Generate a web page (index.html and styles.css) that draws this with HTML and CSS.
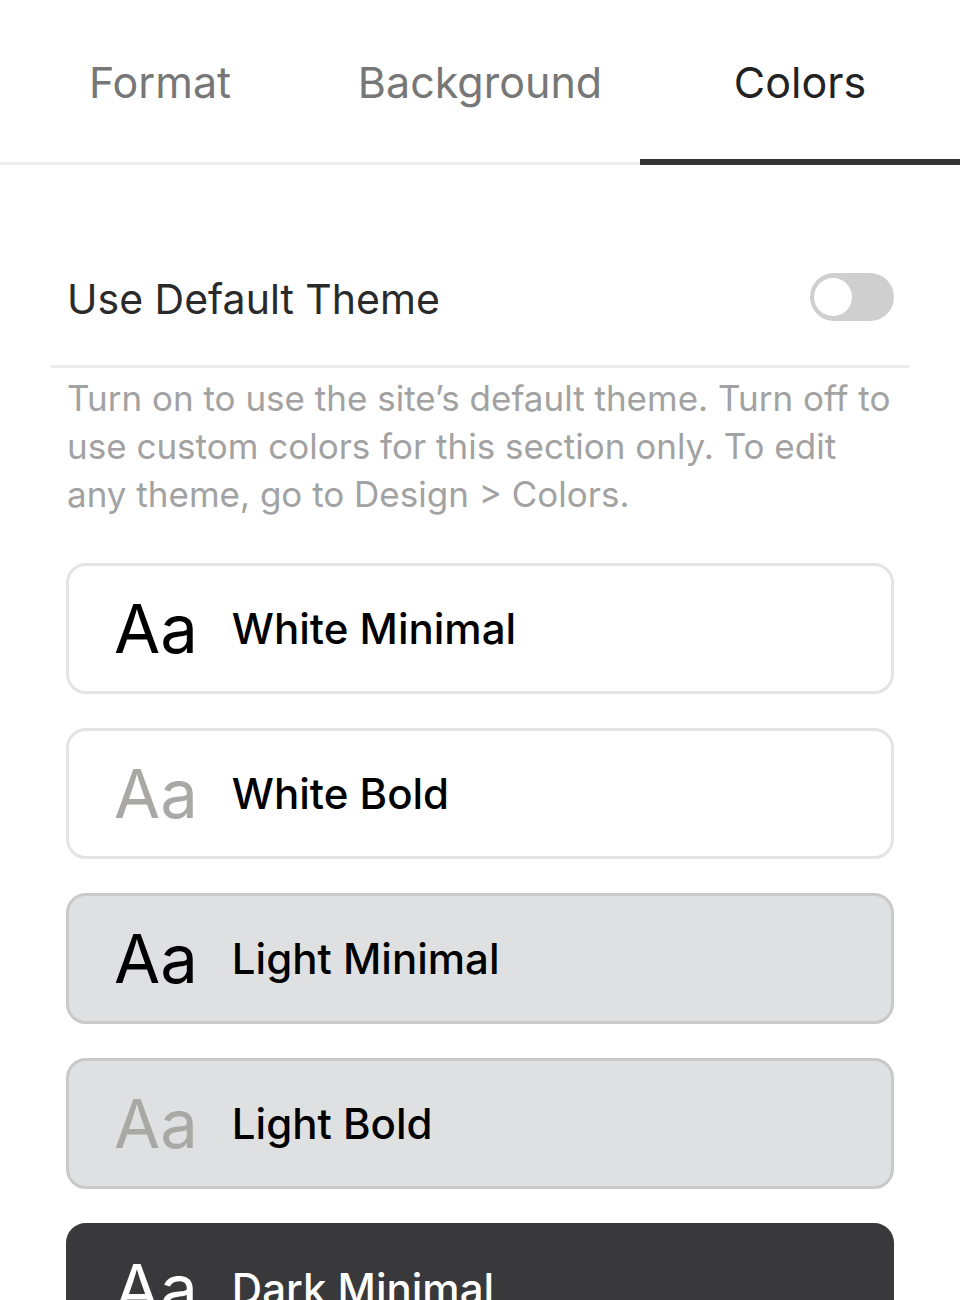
FILE: index.html
```html
<!DOCTYPE html>
<html>
<head>
    <link rel="stylesheet" href="styles.css">
</head>
<body>
    <div class="tabs">
        <div class="tab">Format</div>
        <div class="tab">Background</div>
        <div class="tab active">Colors</div>
    </div>

    <div class="panel">
        <div class="setting-row">
            <span class="setting-label">Use Default Theme</span>
            <span class="toggle"><span class="knob"></span></span>
        </div>
        <p class="help">Turn on to use the site’s default theme. Turn off to use custom colors for this section only. To edit any theme, go to Design &gt; Colors.</p>

        <div class="theme-list">
            <div class="theme white">
                <span class="sample">Aa</span>
                <span class="name">White Minimal</span>
            </div>
            <div class="theme white bold">
                <span class="sample">Aa</span>
                <span class="name">White Bold</span>
            </div>
            <div class="theme light">
                <span class="sample">Aa</span>
                <span class="name">Light Minimal</span>
            </div>
            <div class="theme light bold">
                <span class="sample">Aa</span>
                <span class="name">Light Bold</span>
            </div>
            <div class="theme dark">
                <span class="sample">Aa</span>
                <span class="name">Dark Minimal</span>
            </div>
            <div class="theme dark bold">
                <span class="sample">Aa</span>
                <span class="name">Dark Bold</span>
            </div>
        </div>
    </div>
</body>
</html>
```

FILE: styles.css
```css
body {
    margin: 0;
    font-family: Inter, "Liberation Sans", Arial, sans-serif;
    background-color: #fff;
    color: #222;
}
.tabs {
    display: grid;
    grid-template-columns: 1fr 1fr 1fr;
    border-bottom: 3px solid #eeeeee;
}
.tab {
    height: 165px;
    box-sizing: border-box;
    margin-bottom: -3px;
    padding-top: 4px;
    border-bottom: 6px solid transparent;
    display: flex;
    align-items: center;
    justify-content: center;
    font-size: 43px;
    color: #777;
}
.tab.active {
    color: #222;
    border-bottom-color: #333;
}
.panel {
    padding: 0 50px;
}
.setting-row {
    display: flex;
    justify-content: space-between;
    align-items: center;
    padding: 106px 16px 42px 17px;
    border-bottom: 3px solid #ececec;
}
.setting-label {
    font-size: 41px;
    line-height: 48px;
    padding-top: 4px;
    color: #2a2a2a;
}
.toggle {
    width: 84px;
    height: 48px;
    border-radius: 24px;
    background: #cfcfcf;
    display: flex;
    align-items: center;
    padding: 0 4px;
    box-sizing: border-box;
}
.knob {
    width: 38px;
    height: 38px;
    border-radius: 50%;
    background: #fff;
}
.help {
    margin: 6px 0 0;
    padding: 0 17px;
    font-size: 35px;
    line-height: 48px;
    color: #a2a2a2;
}
.theme-list {
    display: flex;
    flex-direction: column;
    gap: 34px;
    margin: 45px 16px 0;
}
.theme {
    height: 131px;
    box-sizing: border-box;
    border: 3px solid #e4e4e4;
    border-radius: 20px;
    display: flex;
    align-items: center;
    gap: 34px;
    padding: 0 45px;
    color: #000;
}
.sample {
    font-size: 67px;
    line-height: 1;
}
.name {
    font-size: 42px;
    font-weight: 500;
}
.bold .sample {
    color: #a9a8a4;
}
.theme.light {
    background: #dfe0e2;
    border-color: #c9c9c9;
}
.theme.dark {
    background: #39393b;
    border-color: #39393b;
    color: #fff;
}
.theme.dark.bold .sample {
    color: #8a8a88;
}
```
